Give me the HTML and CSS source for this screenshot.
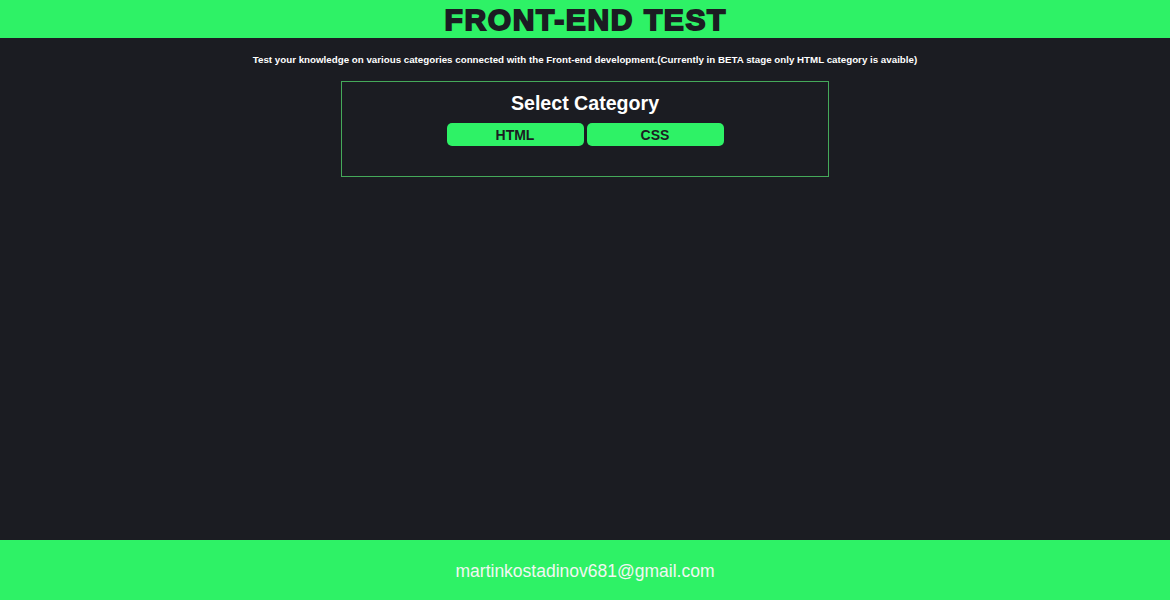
FILE: index.html
```html
<!DOCTYPE html>
<html lang="en">
<head>
<meta charset="utf-8">
<title>Front-End Test</title>
<link rel="stylesheet" href="styles.css">
</head>
<body>
<header class="top">
  <h1 class="brand">FRONT-END TEST</h1>
</header>
<main class="main">
  <p class="intro">Test your knowledge on various categories connected with the Front-end development.(Currently in BETA stage only HTML category is avaible)</p>
  <section class="panel">
    <h2 class="panel-title">Select Category</h2>
    <div class="choices">
      <button class="choice">HTML</button>
      <button class="choice">CSS</button>
    </div>
  </section>
</main>
<footer class="bottom">
  <span class="mail">martinkostadinov681@gmail.com</span>
</footer>
</body>
</html>
```

FILE: styles.css
```css
* { box-sizing: border-box; }
html, body { margin: 0; padding: 0; }
body {
  background: #1b1c22;
  font-family: "Liberation Sans", Arial, sans-serif;
  min-height: 100vh;
  display: flex;
  flex-direction: column;
}
.top {
  background: #2ef266;
  height: 38px;
  display: flex;
  justify-content: center;
  align-items: center;
}
.brand {
  margin: 0;
  font-size: 30px;
  font-weight: 900;
  letter-spacing: 1.6px;
  color: #1b1c22;
  -webkit-text-stroke: 1.8px #1b1c22;
  line-height: 1;
  padding-top: 1px;
  padding-left: 1.6px;
}
.main {
  flex: 1;
  display: flex;
  flex-direction: column;
  align-items: center;
}
.intro {
  margin: 16px 0 0;
  font-size: 9.76px;
  font-weight: bold;
  line-height: 12px;
  color: #fff;
}
.panel {
  margin-top: 15px;
  width: 488px;
  height: 96px;
  border: 1px solid #45a95a;
  padding-top: 9px;
  display: flex;
  flex-direction: column;
  align-items: center;
}
.panel-title {
  margin: 0;
  font-size: 19.6px;
  line-height: 24px;
  font-weight: bold;
  color: #fff;
}
.choices {
  margin-top: 8px;
  display: flex;
  gap: 3px;
}
.choice {
  width: 137px;
  height: 23px;
  border: none;
  border-radius: 5px;
  background: #2ef266;
  color: #1b1c22;
  font-family: "Liberation Sans", Arial, sans-serif;
  font-size: 14px;
  font-weight: bold;
  padding: 0;
  cursor: pointer;
}
.bottom {
  background: #2ef266;
  height: 60px;
  display: flex;
  justify-content: center;
  align-items: center;
}
.mail {
  color: #f2f7f2;
  font-size: 17.5px;
  padding-top: 3px;
}
```
